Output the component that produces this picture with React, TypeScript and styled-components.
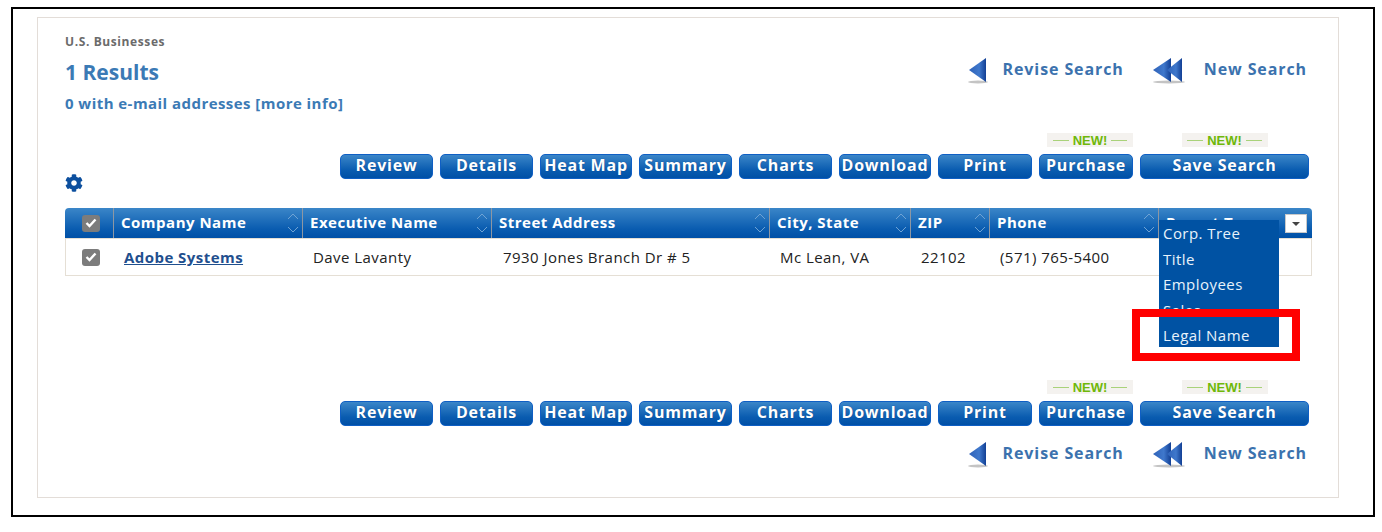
import React from "react";
import { createGlobalStyle, styled } from "styled-components";
import { FaCog } from "react-icons/fa";

const actions = [
  { label: "Review", width: 93 },
  { label: "Details", width: 93 },
  { label: "Heat Map", width: 92 },
  { label: "Summary", width: 93 },
  { label: "Charts", width: 93 },
  { label: "Download", width: 92 },
  { label: "Print", width: 94 },
  { label: "Purchase", width: 94, isNew: true, badgeEnd: true },
  { label: "Save Search", width: 169, isNew: true },
];

const columns = [
  "Company Name",
  "Executive Name",
  "Street Address",
  "City, State",
  "ZIP",
  "Phone",
];

const menuItems = ["Corp. Tree", "Title", "Employees", "Sales", "Legal Name"];

const ArrowIcon: React.FC<{ double?: boolean }> = ({ double }) => (
  <svg width={double ? 36 : 22} height="28" viewBox={double ? "0 0 36 28" : "0 0 22 28"}>
    <defs>
      <linearGradient id="arrowFill" x1="0" y1="0" x2="1" y2="0">
        <stop offset="0" stopColor="#2f62b8" />
        <stop offset="0.6" stopColor="#3f78cc" />
        <stop offset="1" stopColor="#123f94" />
      </linearGradient>
    </defs>
    <ellipse cx={double ? 16 : 10} cy="25" rx={double ? 16 : 10} ry="1.5" fill="#c4c4c4" />
    <polygon points={double ? "0,13 18,1 18,25" : "1,13 18,1 18,25"} fill="url(#arrowFill)" />
    {double && <polygon points="14,13 29,1 29,25" fill="url(#arrowFill)" />}
  </svg>
);

const SortIcon = () => (
  <svg width="14" height="24" viewBox="0 0 14 24">
    <path d="M2 8 L7 3 L12 8" fill="none" stroke="#6fa3d4" strokeWidth="1" />
    <path d="M2 16 L7 21 L12 16" fill="none" stroke="#6fa3d4" strokeWidth="1" />
  </svg>
);

const CheckIcon = () => (
  <svg width="12" height="10" viewBox="0 0 12 10">
    <path d="M1.5 5 L4.5 8 L10.5 1.5" fill="none" stroke="#fff" strokeWidth="2.4" />
  </svg>
);

const NavLinks = () => (
  <NavRow>
    <NavLink $iconGap={13}>
      <ArrowIcon />
      <NavText>Revise Search</NavText>
    </NavLink>
    <NavLink $iconGap={15}>
      <ArrowIcon double />
      <NavText>New Search</NavText>
    </NavLink>
  </NavRow>
);

const ActionButtons = () => (
  <ButtonRow>
    {actions.map((action) => (
      <ButtonSlot key={action.label} $width={action.width}>
        {action.isNew && (
          <NewBadge $end={action.badgeEnd}>
            <BadgeLine />
            NEW!
            <BadgeLine />
          </NewBadge>
        )}
        <ActionButton>{action.label}</ActionButton>
      </ButtonSlot>
    ))}
  </ButtonRow>
);

export default function App() {
  return (
    <>
      <GlobalStyle />
      <Frame>
        <Panel>
          <TopSection>
            <div>
              <Category>U.S. Businesses</Category>
              <ResultCount>1 Results</ResultCount>
              <EmailNote>0 with e-mail addresses [more info]</EmailNote>
            </div>
            <NavLinks />
          </TopSection>

          <Toolbar>
            <GearIcon>
              <FaCog size={18} />
            </GearIcon>
            <ActionButtons />
          </Toolbar>

          <Table>
            <HeaderRow>
              <CheckHeader>
                <CheckBox>
                  <CheckIcon />
                </CheckBox>
              </CheckHeader>
              {columns.map((col) => (
                <HeaderCell key={col}>
                  {col}
                  <SortSlot>
                    <SortIcon />
                  </SortSlot>
                </HeaderCell>
              ))}
              <HeaderCell>
                Parent Type
                <SelectToggle />
                <ColumnMenu>
                  {menuItems.map((item) => (
                    <MenuItem key={item}>{item}</MenuItem>
                  ))}
                </ColumnMenu>
                <Highlight />
              </HeaderCell>
            </HeaderRow>
            <DataRow>
              <CheckCell>
                <CheckBox>
                  <CheckIcon />
                </CheckBox>
              </CheckCell>
              <DataCell>
                <CompanyLink>Adobe Systems</CompanyLink>
              </DataCell>
              <DataCell $indent={10}>Dave Lavanty</DataCell>
              <DataCell $indent={11}>7930 Jones Branch Dr # 5</DataCell>
              <DataCell $indent={10}>Mc Lean, VA</DataCell>
              <DataCell $indent={10}>22102</DataCell>
              <DataCell $indent={10}>(571) 765-5400</DataCell>
              <DataCell />
            </DataRow>
          </Table>

          <BottomToolbar>
            <ActionButtons />
          </BottomToolbar>
          <BottomNav>
            <NavLinks />
          </BottomNav>
        </Panel>
      </Frame>
    </>
  );
}

const GlobalStyle = createGlobalStyle`
  body {
    margin: 0;
    background: #fff;
    font-family: "Open Sans", "Liberation Sans", sans-serif;
  }
`;

const Frame = styled.div`
  box-sizing: border-box;
  width: 1364px;
  height: 510px;
  margin: 7px 0 0 11px;
  padding: 8px 0 0 24px;
  border: 2px solid #000;
`;

const Panel = styled.div`
  box-sizing: border-box;
  width: 1302px;
  height: 481px;
  padding: 0 26px 0 27px;
  border: 1px solid #e3ddd8;
  position: relative;
`;

const TopSection = styled.div`
  display: flex;
  justify-content: space-between;
  height: 99px;
  padding-right: 5px;
`;

const Category = styled.div`
  margin-top: 16px;
  font-size: 12px;
  line-height: 15px;
  font-weight: 700;
  letter-spacing: 0.6px;
  color: #6b6b6b;
`;

const ResultCount = styled.div`
  margin-top: 8px;
  font-size: 21px;
  line-height: 30px;
  font-weight: 700;
  color: #3b7ab5;
`;

const EmailNote = styled.div`
  margin-top: 6px;
  font-size: 15px;
  line-height: 20px;
  font-weight: 700;
  letter-spacing: 0.45px;
  color: #3b7ab5;
`;

const NavRow = styled.div`
  display: flex;
  gap: 29px;
  height: 28px;
  margin-top: 39px;
`;

const NavLink = styled.a<{ $iconGap: number }>`
  display: flex;
  align-items: center;
  gap: ${(p) => p.$iconGap}px;
  font-size: 16px;
  line-height: 24px;
  font-weight: 700;
  letter-spacing: 0.9px;
  color: #3b72ae;
`;

const NavText = styled.span`
  margin-bottom: 4px;
`;

const Toolbar = styled.div`
  display: flex;
  justify-content: space-between;
  align-items: flex-end;
  height: 62px;
  padding-right: 3px;
`;

const GearIcon = styled.div`
  display: flex;
  color: #0c4f9e;
  margin-bottom: -13px;
`;

const ButtonRow = styled.div`
  display: flex;
  gap: 7px;
  align-items: flex-end;
`;

const ButtonSlot = styled.div<{ $width: number }>`
  display: flex;
  flex-direction: column;
  align-items: center;
  width: ${(p) => p.$width}px;
`;

const NewBadge = styled.div<{ $end?: boolean }>`
  display: flex;
  align-items: center;
  justify-content: center;
  gap: 4px;
  box-sizing: border-box;
  width: 86px;
  height: 14px;
  margin-bottom: 7px;
  align-self: ${(p) => (p.$end ? "flex-end" : "center")};
  background: #f4f2ef;
  font-family: "Liberation Sans", sans-serif;
  font-size: 13px;
  font-weight: 700;
  color: #6fb80a;
`;

const BadgeLine = styled.span`
  width: 16px;
  height: 1px;
  background: #a9d27a;
`;

const ActionButton = styled.button`
  box-sizing: border-box;
  width: 100%;
  height: 25px;
  padding: 0 0 3px;
  border: 1px solid #0f5fc4;
  border-radius: 5px;
  background: linear-gradient(#3b86c8, #0a5cb0 65%, #0050a6);
  font-family: "Open Sans", sans-serif;
  font-size: 16px;
  font-weight: 700;
  line-height: 20px;
  letter-spacing: 0.8px;
  white-space: nowrap;
  color: #fff;
  text-shadow: 0 0 1px #0a3f80;
`;

const Table = styled.div`
  margin-top: 29px;
  width: 1247px;
`;

const rowGrid = "48px 189px 189px 278px 141px 79px 169px 154px";

const HeaderRow = styled.div`
  display: grid;
  grid-template-columns: ${rowGrid};
  height: 30px;
  border-radius: 4px 4px 0 0;
  background: linear-gradient(#3b86c8, #0a5cb0 70%, #0050a6);
`;

const CheckHeader = styled.div`
  display: flex;
  align-items: center;
  justify-content: center;
  margin-left: 4px;
`;

const HeaderCell = styled.div`
  position: relative;
  box-sizing: border-box;
  padding-left: 7px;
  border-left: 1px solid #8d97a3;
  font-size: 15px;
  font-weight: 700;
  line-height: 28px;
  letter-spacing: 0.5px;
  white-space: nowrap;
  color: #fff;
`;

const SortSlot = styled.span`
  position: absolute;
  right: 2px;
  top: 3px;
  display: flex;
`;

const SelectToggle = styled.span`
  position: absolute;
  top: 6px;
  right: 5px;
  width: 22px;
  height: 19px;
  box-sizing: border-box;
  background: #fff;
  border: 1px solid #c9c9c9;

  &::after {
    content: "";
    position: absolute;
    left: 6px;
    top: 7px;
    border-style: solid;
    border-width: 4px 4px 0;
    border-color: #444 transparent transparent;
  }
`;

const ColumnMenu = styled.div`
  position: absolute;
  left: 0;
  top: 12px;
  width: 120px;
  height: 127px;
  padding-top: 1px;
  box-sizing: border-box;
  background: #0052a3;
`;

const MenuItem = styled.div`
  padding-left: 4px;
  font-size: 15px;
  font-weight: 400;
  line-height: 25.5px;
  letter-spacing: 0.45px;
  color: #e8f2fb;
`;

const Highlight = styled.div`
  position: absolute;
  left: -27px;
  top: 101px;
  box-sizing: border-box;
  width: 168px;
  height: 52px;
  border: 8.5px solid #ff0000;
`;

const DataRow = styled.div`
  display: grid;
  grid-template-columns: ${rowGrid};
  align-items: center;
  box-sizing: border-box;
  height: 38px;
  border: 1px solid #e5dfd5;
`;

const CheckCell = styled.div`
  display: flex;
  justify-content: center;
  margin-left: 2px;
`;

const CheckBox = styled.span`
  display: flex;
  align-items: center;
  justify-content: center;
  width: 18px;
  height: 17px;
  border-radius: 3px;
  background: #7c7c7c;
`;

const DataCell = styled.div<{ $indent?: number }>`
  padding-left: ${(p) => p.$indent ?? 10}px;
  font-size: 15px;
  letter-spacing: 0.45px;
  white-space: nowrap;
  color: #222;
`;

const CompanyLink = styled.a`
  font-weight: 700;
  color: #1f4f8e;
  text-decoration: underline;
`;

const BottomToolbar = styled.div`
  display: flex;
  justify-content: flex-end;
  height: 150px;
  align-items: flex-end;
  padding-right: 3px;
`;

const BottomNav = styled.div`
  display: flex;
  justify-content: flex-end;
  padding-right: 5px;
  margin-top: -24px;
`;
